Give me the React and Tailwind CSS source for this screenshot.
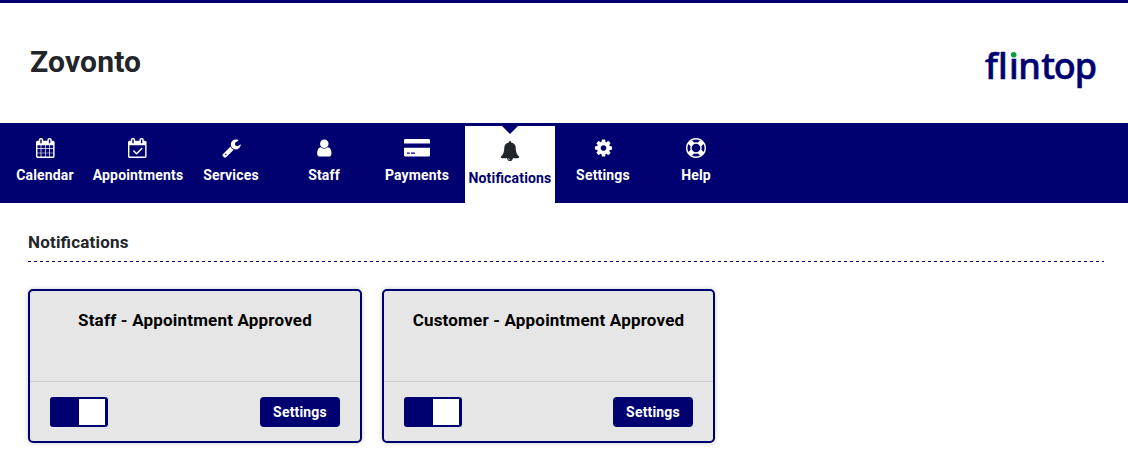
const ICONS = {
  calendar: 'M192 1664h288v-288h-288v288zm352 0h320v-288h-320v288zm-352-352h288v-320h-288v320zm352 0h320v-320h-320v320zm-352-384h288v-288h-288v288zm736 736h320v-288h-320v288zm-384-736h320v-288h-320v288zm768 736h288v-288h-288v288zm-384-352h320v-320h-320v320zm-352-864v-288q0-13-9.5-22.5t-22.5-9.5h-64q-13 0-22.5 9.5t-9.5 22.5v288q0 13 9.5 22.5t22.5 9.5h64q13 0 22.5-9.5t9.5-22.5zm736 864h288v-320h-288v320zm-384-384h320v-288h-320v288zm384 0h288v-288h-288v288zm32-480v-288q0-13-9.5-22.5t-22.5-9.5h-64q-13 0-22.5 9.5t-9.5 22.5v288q0 13 9.5 22.5t22.5 9.5h64q13 0 22.5-9.5t9.5-22.5zm384-64v1280q0 52-38 90t-90 38h-1408q-52 0-90-38t-38-90v-1280q0-52 38-90t90-38h128v-96q0-66 47-113t113-47h64q66 0 113 47t47 113v96h384v-96q0-66 47-113t113-47h64q66 0 113 47t47 113v96h128q52 0 90 38t38 90z',
  check: 'M1367 964l-512 512q-10 9-23 9t-23-9l-288-288q-9-10-9-23t9-22l46-46q9-9 22-9t23 9l220 220 444-444q10-9 23-9t22 9l46 46q9 9 9 22t-9 23zm-1175 700h1408v-1024h-1408v1024zm384-1216v-288q0-14-9-23t-23-9h-64q-14 0-23 9t-9 23v288q0 14 9 23t23 9h64q14 0 23-9t9-23zm768 0v-288q0-14-9-23t-23-9h-64q-14 0-23 9t-9 23v288q0 14 9 23t23 9h64q14 0 23-9t9-23zm384-64v1280q0 52-38 90t-90 38h-1408q-52 0-90-38t-38-90v-1280q0-52 38-90t90-38h128v-96q0-66 47-113t113-47h64q66 0 113 47t47 113v96h384v-96q0-66 47-113t113-47h64q66 0 113 47t47 113v96h128q52 0 90 38t38 90z',
  wrench: 'M448 1472q0-26-19-45t-45-19-45 19-19 45 19 45 45 19 45-19 19-45zm644-420l-682 682q-37 37-90 37-52 0-91-37l-106-108q-38-36-38-90 0-53 38-91l681-681q39 98 114.5 173.5t173.5 114.5zm634-435q0 39-23 106-47 134-164.5 217.5t-258.5 83.5q-185 0-316.5-131.5t-131.5-316.5 131.5-316.5 316.5-131.5q58 0 121.5 16.5t107.5 46.5q16 11 16 28t-16 28l-293 169v224l193 107q5-3 79-48.5t135.5-81 70.5-35.5q15 0 23.5 10t8.5 25z',
  user: 'M1536 1399q0 109-62.5 187t-150.5 78h-854q-88 0-150.5-78t-62.5-187q0-85 8.5-160.5t31.5-152 58.5-131 94-89 134.5-34.5q131 128 313 128t313-128q76 0 134.5 34.5t94 89 58.5 131 31.5 152 8.5 160.5zm-256-887q0 159-112.5 271.5t-271.5 112.5-271.5-112.5-112.5-271.5 112.5-271.5 271.5-112.5 271.5 112.5 112.5 271.5z',
  bell: 'M912 1696q0-16-16-16-59 0-101.5-42.5t-42.5-101.5q0-16-16-16t-16 16q0 73 51.5 124.5t124.5 51.5q16 0 16-16zm816-288q0 52-38 90t-90 38h-448q0 106-75 181t-181 75-181-75-75-181h-448q-52 0-90-38t-38-90q50-42 91-88t85-119.5 74.5-158.5 50-206 19.5-260q0-152 117-282.5t307-158.5q-8-19-8-39 0-40 28-68t68-28 68 28 28 68q0 20-8 39 190 28 307 158.5t117 282.5q0 139 19.5 260t50 206 74.5 158.5 85 119.5 91 88z',
  cog: 'M1152 896q0-106-75-181t-181-75-181 75-75 181 75 181 181 75 181-75 75-181zm512-109v222q0 12-8 23t-20 13l-185 28q-19 54-39 91 35 50 107 138 10 12 10 25t-9 23q-27 37-99 108t-94 71q-12 0-26-9l-138-108q-44 23-91 38-16 136-29 186-7 28-36 28h-222q-14 0-24.5-8.5t-11.5-21.5l-28-184q-49-16-90-37l-141 107q-10 9-25 9-14 0-25-11-126-114-165-168-7-10-7-23 0-12 8-23 15-21 51-66.5t54-70.5q-27-50-41-99l-183-27q-13-2-21-12.5t-8-23.5v-222q0-12 8-23t19-13l186-28q14-46 39-92-40-57-107-138-10-12-10-24 0-10 9-23 26-36 98.5-107.5t94.5-71.5q13 0 26 10l138 107q44-23 91-38 16-136 29-186 7-28 36-28h222q14 0 24.5 8.5t11.5 21.5l28 184q49 16 90 37l142-107q9-9 24-9 13 0 25 10 129 119 165 170 7 8 7 22 0 12-8 23-15 21-51 66.5t-54 70.5q26 50 41 98l183 28q13 2 21 12.5t8 23.5z',
  help: 'M896 0q182 0 348 71t286 191 191 286 71 348-71 348-191 286-286 191-348 71-348-71-286-191-191-286-71-348 71-348 191-286 286-191 348-71zm0 128q-190 0-361 90l194 194q82-28 167-28t167 28l194-194q-171-90-361-90zm-678 1129l194-194q-28-82-28-167t28-167l-194-194q-90 171-90 361t90 361zm678 407q190 0 361-90l-194-194q-82 28-167 28t-167-28l-194 194q171 90 361 90zm0-384q159 0 271.5-112.5t112.5-271.5-112.5-271.5-271.5-112.5-271.5 112.5-112.5 271.5 112.5 271.5 271.5 112.5zm484-217l194 194q90-171 90-361t-90-361l-194 194q28 82 28 167t-28 167z',
};

const BOXES = {
  calendar: '-27 0 1792 1792',
  check: '64 0 1792 1792',
  wrench: '-45 0 1792 1792',
  user: '-27 0 1792 1792',
  bell: '0 0 1792 1792',
  cog: '-45 0 1792 1792',
  help: '0 0 1792 1792',
};

const NAV = [
  { label: 'Calendar', icon: 'calendar' },
  { label: 'Appointments', icon: 'check' },
  { label: 'Services', icon: 'wrench' },
  { label: 'Staff', icon: 'user' },
  { label: 'Payments', icon: 'card' },
  { label: 'Notifications', icon: 'bell', active: true },
  { label: 'Settings', icon: 'cog' },
  { label: 'Help', icon: 'help' },
];

function Icon({ name }) {
  if (name === 'card') {
    return (
      <svg viewBox="0 0 26 20" className="h-5 w-[26px]" fill="currentColor" aria-hidden="true">
        <path d="M0 5.5V2.3Q0 1 1.4 1h23.2Q26 1 26 2.3v3.2z" />
        <path
          fillRule="evenodd"
          d="M0 9.8h26v7.2q0 1.5-1.4 1.5H1.4Q0 18.500 0 17zM3 14.400v1.400h2.800v-1.400zM7 14.400v1.400h4v-1.400z"
        />
      </svg>
    );
  }
  return (
    <svg viewBox={BOXES[name]} className="h-5 w-5 overflow-visible" fill="currentColor" aria-hidden="true">
      <path d={ICONS[name]} />
    </svg>
  );
}

function Logo() {
  return (
    <svg className="h-[46px] w-[116px] overflow-visible" viewBox="0 0 116 46">
      <text
        x="2 15 26 35.3 58.3 70.7 91.8"
        y="34"
        className="fill-[#000070] stroke-[#000070] font-['Noto_Sans',sans-serif] text-[36px] font-medium [stroke-width:0.6px]"
      >
        flintop
      </text>
      <circle cx="30.7" cy="8.8" r="4.2" className="fill-white" />
      <circle cx="30.7" cy="9.7" r="2.8" className="fill-[#0aa03c]" />
    </svg>
  );
}

function NavItem({ item }) {
  return (
    <a
      className={
        item.active
          ? 'relative mt-[3px] flex w-[90px] flex-col items-center bg-white pt-[15px] text-[#000070]'
          : 'flex w-[90px] flex-col items-center pt-[15px] text-white'
      }
    >
      {item.active && (
        <svg className="absolute top-0 left-[37px] h-2 w-4" viewBox="0 0 16 8">
          <path d="M0 0h16L8 8z" fill="#000070" />
        </svg>
      )}
      <span className={item.active ? 'h-5 text-[#222529]' : 'h-5'}>
        <Icon name={item.icon} />
      </span>
      <span className="mt-[7px] text-sm leading-5 font-bold tracking-[0.17px] whitespace-nowrap">{item.label}</span>
    </a>
  );
}

function Card({ title }) {
  return (
    <section className="flex h-[154px] flex-col rounded-[5px] border-2 border-[#000070] bg-[#e6e6e6] shadow-[0_0_5px_rgba(0,0,0,0.2)]">
      <h3 className="h-[90px] pt-[17px] text-center text-[17px] leading-6 font-bold tracking-[0.19px] text-black">
        {title}
      </h3>
      <div className="flex flex-1 items-center justify-between border-t border-[#cccccc] px-5">
        <div className="flex h-[30px] w-[58px] justify-end rounded-[3px] border-y-2 border-r-[3px] border-[#000070] bg-[#000070]">
          <span className="h-[26px] w-[26px] bg-white" />
        </div>
        <button className="h-[30px] w-20 rounded-[4px] bg-[#000070] text-sm font-bold tracking-[0.17px] text-white">
          Settings
        </button>
      </div>
    </section>
  );
}

export default function App() {
  return (
    <div className="h-[460px] overflow-hidden border-t-[3px] border-[#000070] bg-white font-['Roboto',sans-serif] [font-feature-settings:'liga'_1]">
      <header className="flex h-[120px] items-start justify-between pr-[29px] pl-[30px]">
        <h1 className="pt-10 text-[30px] leading-[38px] font-bold tracking-[0.17px] text-[#222529]">Zovonto</h1>
        <div className="pt-[42px]">
          <Logo />
        </div>
      </header>
      <nav className="flex h-20 gap-[3px] bg-[#000070]">
        {NAV.map((item) => (
          <NavItem key={item.label} item={item} />
        ))}
      </nav>
      <main className="pr-6 pl-7">
        <h2 className="h-[58px] pt-[27px] text-[17px] leading-6 font-bold tracking-[0.19px] text-[#222529]">
          Notifications
        </h2>
        <div className="h-px bg-[repeating-linear-gradient(90deg,#000070_0_3px,transparent_3px_6px)]" />
        <div className="mt-[27px] grid grid-cols-[334px_333px] gap-5">
          <Card title="Staff - Appointment Approved" />
          <Card title="Customer - Appointment Approved" />
        </div>
      </main>
    </div>
  );
}
